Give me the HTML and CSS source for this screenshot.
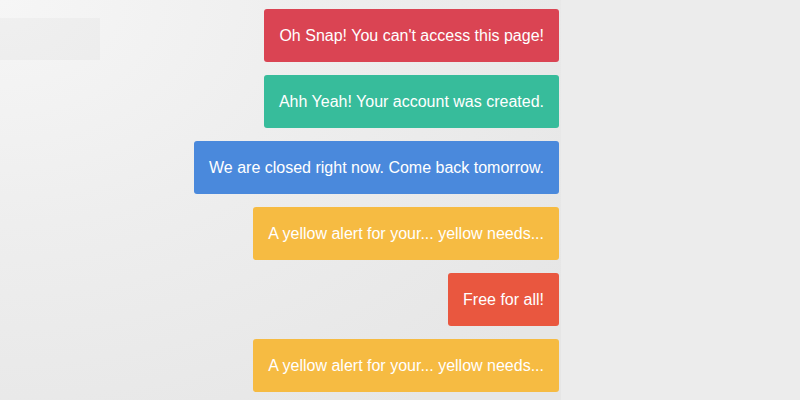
FILE: index.html
```html
<!DOCTYPE html>
<html>
<head>
<meta charset="utf-8">
<link rel="stylesheet" href="styles.css">
</head>
<body>
<div class="page">
  <div class="panel">
    <div class="ghost"></div>
    <div class="alerts">
      <div class="alert alert-danger">Oh Snap! You can't access this page!</div>
      <div class="alert alert-success">Ahh Yeah! Your account was created.</div>
      <div class="alert alert-info">We are closed right now. Come back tomorrow.</div>
      <div class="alert alert-warning">A yellow alert for your... yellow needs...</div>
      <div class="alert alert-orange">Free for all!</div>
      <div class="alert alert-warning">A yellow alert for your... yellow needs...</div>
    </div>
  </div>
  <div class="side"></div>
</div>
</body>
</html>
```
FILE: styles.css
```css
html, body {
  margin: 0;
  padding: 0;
  width: 800px;
  height: 400px;
  overflow: hidden;
  background: #ebebeb;
  font-family: Arial, "Liberation Sans", sans-serif;
}
.page {
  display: flex;
  width: 800px;
  height: 400px;
}
.panel {
  position: relative;
  width: 561px;
  height: 400px;
  box-sizing: border-box;
  padding: 9px 2px 0 0;
  background: radial-gradient(ellipse 700px 500px at 0 0, #f6f6f6 0%, #eeeeee 45%, #e6e6e6 100%);
}
.ghost {
  position: absolute;
  left: 0;
  top: 18px;
  width: 100px;
  height: 42px;
  background: rgba(0, 0, 0, 0.025);
}
.side {
  flex: 1;
  background: #ececec;
}
.alerts {
  display: flex;
  flex-direction: column;
  align-items: flex-end;
  gap: 13px;
}
.alert {
  box-sizing: border-box;
  height: 53px;
  padding: 15px 15px;
  line-height: 23px;
  font-size: 16px;
  color: #ffffff;
  border-radius: 3px;
  white-space: nowrap;
}
.alert-danger { background: #da4453; }
.alert-success { background: #37bc9b; }
.alert-info { background: #4a89dc; }
.alert-warning { background: #f6bb42; }
.alert-orange { background: #e9573f; }
```
